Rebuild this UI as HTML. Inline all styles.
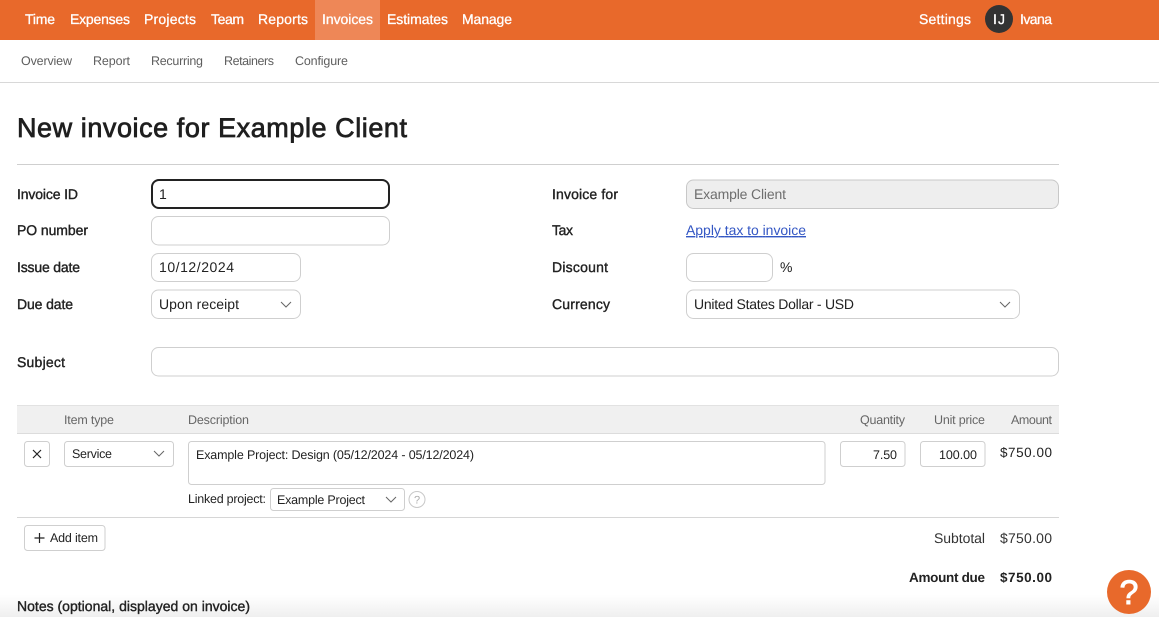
<!DOCTYPE html>
<html lang="en"><head><meta charset="utf-8"><title>New invoice</title>
<style>
html,body{margin:0;padding:0;background:#fff;width:1159px;height:617px;overflow:hidden}
svg{display:block;font-family:"Liberation Sans",sans-serif;text-rendering:geometricPrecision}
.n{font-size:14px;fill:#fff;stroke:#fff;stroke-width:.3}
.s{font-size:12.5px;fill:#5e5e5e}
.l{font-size:14px;fill:#222;stroke:#222;stroke-width:.38}
.v{font-size:14px;fill:#222}
.t{font-size:12.5px;fill:#222}
.h{font-size:12.5px;fill:#666}
.b{fill:#fff;stroke:#cfcfcf;stroke-width:1}
.c{fill:none;stroke:#666;stroke-width:1}
</style></head><body>
<svg width="1159" height="617" viewBox="0 0 1159 617" xmlns="http://www.w3.org/2000/svg">
<defs><linearGradient id="g" x1="0" y1="0" x2="0" y2="1"><stop offset="0" stop-color="#fff"/><stop offset="1" stop-color="#efefef"/></linearGradient></defs>
<rect width="1159" height="617" fill="#fff"/>
<rect y="595" width="1159" height="22" fill="url(#g)"/>
<rect width="1159" height="40" fill="#e8692b"/>
<rect x="315" width="65" height="40" fill="#ee8757"/>
<text class="n" x="25" y="24" textLength="30">Time</text>
<text class="n" x="70" y="24" textLength="60">Expenses</text>
<text class="n" x="144" y="24" textLength="52">Projects</text>
<text class="n" x="211" y="24" textLength="33">Team</text>
<text class="n" x="258" y="24" textLength="50">Reports</text>
<text class="n" x="322" y="24" textLength="51">Invoices</text>
<text class="n" x="387" y="24" textLength="61">Estimates</text>
<text class="n" x="462" y="24" textLength="50">Manage</text>
<text class="n" x="919" y="24" textLength="52">Settings</text>
<circle cx="999" cy="19" r="14" fill="#333"/>
<text class="n" x="993" y="24" textLength="12">IJ</text>
<text class="n" x="1020" y="24" textLength="32">Ivana</text>
<text class="s" x="21" y="65" textLength="51">Overview</text>
<text class="s" x="93" y="65" textLength="37">Report</text>
<text class="s" x="151" y="65" textLength="52">Recurring</text>
<text class="s" x="224" y="65" textLength="50">Retainers</text>
<text class="s" x="295" y="65" textLength="53">Configure</text>
<rect y="82" width="1159" height="1" fill="#d8d8d8"/>
<text x="17" y="137" font-size="27" fill="#1f1f1f" stroke="#1f1f1f" stroke-width=".75" textLength="390">New invoice for Example Client</text>
<rect x="17" y="164" width="1042" height="1" fill="#cfcfcf"/>

<text class="l" x="17" y="199" textLength="61">Invoice ID</text>
<text class="l" x="17" y="235" textLength="71">PO number</text>
<text class="l" x="17" y="272" textLength="63">Issue date</text>
<text class="l" x="17" y="309" textLength="56">Due date</text>
<text class="l" x="17" y="367" textLength="48">Subject</text>
<rect x="152" y="180" width="237" height="28" rx="7" fill="#fff" stroke="#222" stroke-width="2"/>
<text class="v" x="159" y="199" textLength="8">1</text>
<rect class="b" x="151.500" y="216.500" width="238" height="28.500" rx="7"/>
<rect class="b" x="151.500" y="253.500" width="149" height="28" rx="7"/>
<text class="v" x="159" y="272" textLength="75">10/12/2024</text>
<rect class="b" x="151.500" y="290" width="149" height="28.500" rx="7"/>
<text class="v" x="159" y="309" textLength="80">Upon receipt</text>
<path class="c" d="M281 302l5 5 5-5"/>
<rect class="b" x="151.500" y="347.500" width="907" height="28.500" rx="7"/>

<text class="l" x="552" y="199" textLength="66">Invoice for</text>
<text class="l" x="552" y="235" textLength="21">Tax</text>
<text class="l" x="552" y="272" textLength="56">Discount</text>
<text class="l" x="552" y="309" textLength="58">Currency</text>
<rect x="686.500" y="180" width="372" height="28.500" rx="7" fill="#eee" stroke="#c8c8c8"/>
<text x="694" y="199" font-size="14" fill="#6e6e6e" textLength="92">Example Client</text>
<text x="686" y="235" font-size="14" fill="#3457c4" text-decoration="underline" textLength="120">Apply tax to invoice</text>
<rect class="b" x="686.500" y="253.500" width="86" height="28" rx="7"/>
<text class="v" x="780" y="272" textLength="11">%</text>
<rect class="b" x="686.500" y="290" width="333" height="28.500" rx="7"/>
<text class="v" x="694" y="309" textLength="160">United States Dollar - USD</text>
<path class="c" d="M1000 302l5 5 5-5"/>

<rect x="17" y="405" width="1042" height="29" fill="#f0f0f0"/>
<rect x="17" y="405" width="1042" height="1" fill="#e2e2e2"/>
<rect x="17" y="433" width="1042" height="1" fill="#dcdcdc"/>
<text class="h" x="64" y="424" textLength="50">Item type</text>
<text class="h" x="188" y="424" textLength="61">Description</text>
<text class="h" x="860" y="424" textLength="45">Quantity</text>
<text class="h" x="934" y="424" textLength="51">Unit price</text>
<text class="h" x="1011" y="424" textLength="41">Amount</text>

<rect class="b" x="24.500" y="441.500" width="25" height="25" rx="3"/>
<path d="M33 450l8 8m0-8l-8 8" fill="none" stroke="#222" stroke-width="1.200"/>
<rect class="b" x="64.500" y="441.500" width="109" height="25" rx="3"/>
<text class="t" x="72" y="458" textLength="40">Service</text>
<path class="c" d="M154 451l5 5 5-5"/>
<rect class="b" x="188.500" y="441.500" width="636.500" height="43" rx="3"/>
<text class="t" x="196" y="459" textLength="278">Example Project: Design (05/12/2024 - 05/12/2024)</text>
<text class="t" x="188" y="503" textLength="78">Linked project:</text>
<rect class="b" x="270.500" y="488.500" width="134" height="22" rx="3"/>
<text class="t" x="277" y="504" textLength="88">Example Project</text>
<path class="c" d="M386 497l5 5 5-5"/>
<circle cx="417" cy="499.500" r="8" fill="#fff" stroke="#c8c8c8"/>
<text x="417" y="503.500" font-size="11" fill="#aaa" text-anchor="middle">?</text>
<rect class="b" x="840.500" y="441.500" width="64.500" height="25" rx="3"/>
<text class="t" x="897" y="459" text-anchor="end" textLength="24">7.50</text>
<rect class="b" x="920.500" y="441.500" width="64.500" height="25" rx="3"/>
<text class="t" x="977" y="459" text-anchor="end" textLength="38">100.00</text>
<text class="v" x="1000" y="457" textLength="52" style="font-size:13.5px">$750.00</text>
<rect x="17" y="517" width="1042" height="1" fill="#d6d6d6"/>

<rect class="b" x="24.500" y="525.500" width="80.500" height="25" rx="3"/>
<path d="M34.500 538h10M39.500 533v10" fill="none" stroke="#222" stroke-width="1.200"/>
<text class="t" x="50" y="542" textLength="48">Add item</text>
<text x="934" y="543" font-size="14" fill="#333" textLength="51">Subtotal</text>
<text x="1000" y="543" font-size="14" fill="#333" textLength="52">$750.00</text>
<text x="909" y="582" font-size="13.500" font-weight="700" fill="#222" textLength="76">Amount due</text>
<text x="1000" y="582" font-size="13.500" font-weight="700" fill="#222" textLength="52">$750.00</text>
<text class="l" x="17" y="611" textLength="233">Notes (optional, displayed on invoice)</text>

<circle cx="1129" cy="592" r="22" fill="#e8692b"/>
<text x="1129" y="604" font-size="34" fill="#fff" stroke="#fff" stroke-width=".9" text-anchor="middle">?</text>
</svg>
</body></html>
